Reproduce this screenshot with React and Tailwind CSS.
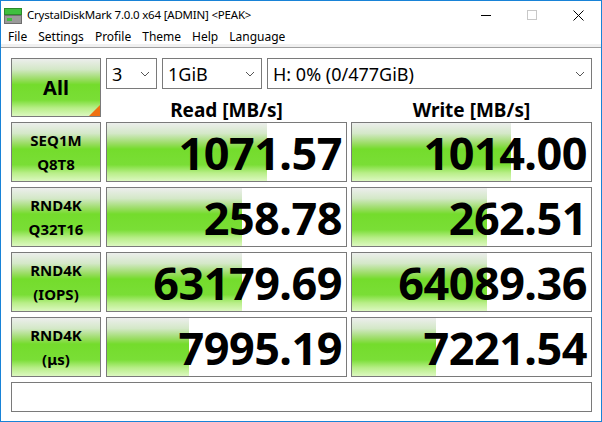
import React from "react";

const results = [
  { top: "SEQ1M", bottom: "Q8T8", read: "1071.57", write: "1014.00", readBar: 160, writeBar: 159 },
  { top: "RND4K", bottom: "Q32T16", read: "258.78", write: "262.51", readBar: 135, writeBar: 135 },
  { top: "RND4K", bottom: "(IOPS)", read: "63179.69", write: "64089.36", readBar: 135, writeBar: 135 },
  { top: "RND4K", bottom: "(μs)", read: "7995.19", write: "7221.54", readBar: 82, writeBar: 84 },
];

const menus = ["File", "Settings", "Profile", "Theme", "Help", "Language"];

const green =
  "bg-[linear-gradient(to_bottom,#eceeec_0%,#d4e8c8_18%,#98dc60_36%,#74dc2c_45%,#7ade36_72%,#b8ee88_86%,#dcf8c0_100%)]";

const Chevron = () => (
  <svg width="10" height="6" viewBox="0 0 10 6" className="shrink-0">
    <path d="M1 1 L5 5 L9 1" fill="none" stroke="#555" strokeWidth="1" />
  </svg>
);

const Select = ({ value, className }) => (
  <div className={`flex items-center justify-between border border-[#7a7a7a] bg-white pl-[5px] pr-[6px] ${className}`}>
    <span className="text-[18px] leading-none text-black">{value}</span>
    <Chevron />
  </div>
);

const Meter = ({ value, bar }) => (
  <div className="relative h-full flex-1 border border-[#7a7a7a] bg-white">
    <div className={`absolute left-0 top-0 bottom-0 ${green}`} style={{ width: bar }} />
    <div className="relative flex h-full items-center justify-end pr-[4px] text-[45px] font-bold leading-none tracking-[-0.5px] text-black">
      {value}
    </div>
  </div>
);

const AppIcon = () => (
  <svg width="18" height="16" viewBox="0 0 18 16">
    <rect x="0.5" y="0.5" width="17" height="6" fill="#3fbf3f" stroke="#2a8a2a" />
    <rect x="0.5" y="7.5" width="17" height="8" fill="#9a9a9a" stroke="#6e6e6e" />
    <rect x="3" y="10" width="5" height="3" fill="#3fbf3f" />
  </svg>
);

export default function App() {
  return (
    <div
      className="flex h-[422px] w-[602px] flex-col border border-[#1883d7] bg-white text-black"
      style={{ fontFamily: '"Noto Sans", "Open Sans", sans-serif' }}
    >
      {/* title bar */}
      <div className="flex h-[28px] items-center">
        <div className="ml-[3px] mt-[1px]">
          <AppIcon />
        </div>
        <span className="ml-[5px] text-[11.5px] tracking-[-0.2px]">CrystalDiskMark 7.0.0 x64 [ADMIN] &lt;PEAK&gt;</span>
        <div className="ml-auto flex h-full items-center">
          <div className="flex w-[46px] justify-center">
            <div className="h-px w-[10px] bg-black" />
          </div>
          <div className="flex w-[46px] justify-center">
            <div className="h-[10px] w-[10px] border border-[#c8c8c8]" />
          </div>
          <div className="flex w-[46px] justify-center">
            <svg width="11" height="11" viewBox="0 0 11 11">
              <path d="M0.5 0.5 L10.5 10.5 M10.5 0.5 L0.5 10.5" stroke="#000" strokeWidth="1" />
            </svg>
          </div>
        </div>
      </div>

      {/* menu bar */}
      <div className="flex h-[15px] items-center gap-[11px] pl-[7px] text-[12px] leading-none">
        {menus.map((m) => (
          <span key={m}>{m}</span>
        ))}
      </div>
      <div className="h-[3px] bg-[#f0f0f0]" />
      <div className="h-px bg-[#a0a0a0]" />

      <div className="flex flex-1 flex-col gap-[5px] pl-[10px] pr-[9px] pt-[10px]">
        {/* controls + headers */}
        <div className="flex h-[59px] gap-[5px]">
          <div className={`relative flex w-[90px] items-center justify-center border border-[#7a7a7a] ${green}`}>
            <span className="text-[20px] font-bold leading-none">All</span>
            <svg className="absolute bottom-0 right-0" width="11" height="11" viewBox="0 0 11 11">
              <path d="M11 0 L11 11 L0 11 Z" fill="#f07010" />
            </svg>
          </div>
          <div className="flex flex-1 flex-col">
            <div className="flex h-[31px] gap-[4px]">
              <Select value="3" className="w-[51px]" />
              <Select value="1GiB" className="ml-px w-[100px]" />
              <Select value="H: 0% (0/477GiB)" className="ml-px flex-1" />
            </div>
            <div className="relative top-[3px] flex flex-1 items-end gap-[4px]">
              <div className="flex-1 text-center text-[19px] font-bold leading-none">Read [MB/s]</div>
              <div className="flex-1 text-center text-[19px] font-bold leading-none">Write [MB/s]</div>
            </div>
          </div>
        </div>

        {/* result rows */}
        {results.map((r, i) => (
          <div key={i} className="flex h-[60px] gap-[5px]">
            <div className={`flex w-[90px] flex-col items-center justify-center gap-[9px] border border-[#7a7a7a] ${green}`}>
              <span className="text-[15px] font-bold leading-none">{r.top}</span>
              <span className="text-[15px] font-bold leading-none">{r.bottom}</span>
            </div>
            <div className="flex flex-1 gap-[4px]">
              <Meter value={r.read} bar={r.readBar} />
              <Meter value={r.write} bar={r.writeBar} />
            </div>
          </div>
        ))}

        {/* comment box */}
        <div className="h-[30px] border border-[#7a7a7a] bg-white" />
      </div>
    </div>
  );
}
